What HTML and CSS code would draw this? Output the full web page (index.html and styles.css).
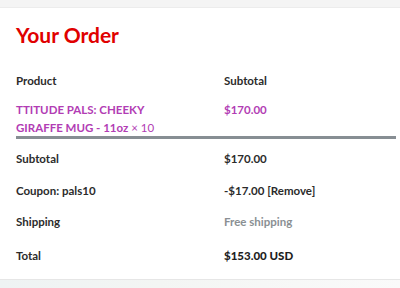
FILE: index.html
```html
<!DOCTYPE html>
<html>
<head>
<meta charset="utf-8">
<link rel="stylesheet" href="styles.css">
</head>
<body>
<div class="topband"></div>
<main class="card">
  <h2 class="title">Your Order</h2>
  <div class="row head">
    <div class="c1">Product</div>
    <div class="c2">Subtotal</div>
  </div>
  <div class="row item">
    <div class="c1">TTITUDE PALS: CHEEKY<br>GIRAFFE MUG - 11oz <span class="qty">&times; 10</span></div>
    <div class="c2">$170.00</div>
  </div>
  <div class="divider"></div>
  <div class="row sub">
    <div class="c1">Subtotal</div>
    <div class="c2">$170.00</div>
  </div>
  <div class="row coupon">
    <div class="c1">Coupon: pals10</div>
    <div class="c2">-$17.00 [Remove]</div>
  </div>
  <div class="row ship">
    <div class="c1">Shipping</div>
    <div class="c2 free">Free shipping</div>
  </div>
  <div class="row total">
    <div class="c1">Total</div>
    <div class="c2 strong">$153.00 USD</div>
  </div>
</main>
<div class="bottomband"></div>
</body>
</html>
```
FILE: styles.css
```css
html, body {
  margin: 0;
  padding: 0;
  background: #ffffff;
  font-family: "Lato", "Open Sans", sans-serif;
  color: #2b2b2b;
}
.topband {
  height: 7px;
  background: #f4f4f4;
  border-bottom: 1px solid #ececec;
}
.card {
  padding: 0 4px 0 16px;
  height: 271px;
  box-sizing: border-box;
}
.title {
  margin: 0;
  padding-top: 12px;
  font-size: 21px;
  line-height: 30px;
  font-weight: 700;
  color: #e00000;
}
.row {
  display: flex;
  font-size: 11.5px;
  font-weight: 700;
  line-height: 18px;
}
.c1 { width: 208px; }
.c2 { flex: 1; }
.head { margin-top: 22px; }
.item {
  margin-top: 11px;
  color: #b23db4;
}
.item .qty { font-weight: 400; }
.divider {
  height: 3px;
  background: #878e93;
  margin-top: -1px;
}
.sub { margin-top: 11px; }
.coupon { margin-top: 14px; }
.ship { margin-top: 13px; }
.free { color: #8a8f93; }
.total { margin-top: 16px; }
.strong { font-weight: 900; color: #1e1e1e; }
.bottomband {
  height: 10px;
  border-top: 1px solid #e6e6e6;
  background: linear-gradient(90deg, #eef3f3, #f3f5f3 40%, #fafafa);
}
```
